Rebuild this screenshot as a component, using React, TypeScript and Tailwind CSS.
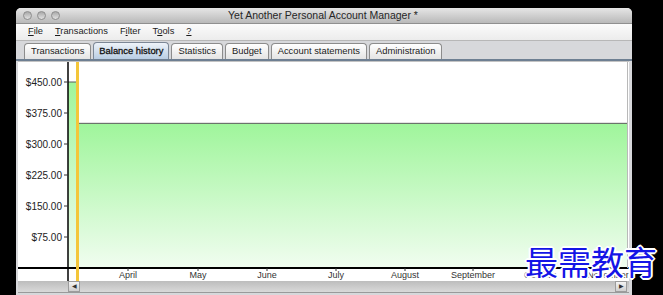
import type { ReactNode } from 'react'

const yTicks = [
  { label: '$450.00', v: 450 },
  { label: '$375.00', v: 375 },
  { label: '$300.00', v: 300 },
  { label: '$225.00', v: 225 },
  { label: '$150.00', v: 150 },
  { label: '$75.00', v: 75 },
]

const months = [
  { label: 'April', x: 110 },
  { label: 'May', x: 180 },
  { label: 'June', x: 249 },
  { label: 'July', x: 318 },
  { label: 'August', x: 387 },
  { label: 'September', x: 455 },
  { label: 'October', x: 522 },
  { label: 'November', x: 590 },
]

const tabs = ['Transactions', 'Balance history', 'Statistics', 'Budget', 'Account statements', 'Administration']

// chart coordinates: x-axis at y=206, y-axis at x=50
const AXIS_Y = 206
const yv = (v: number) => AXIS_Y - (v * 31) / 75

function Light() {
  return <div className="w-[9px] h-[9px] rounded-full bg-gradient-to-b from-[#a9a9a9] to-[#e2e2e2] border border-[#8d8d8d]" />
}

function BalanceChart() {
  const font = 'Liberation Sans, Arial, sans-serif'
  return (
    <svg width="611" height="219" className="block">
      <defs>
        <linearGradient id="fill" x1="0" y1="0" x2="0" y2="1">
          <stop offset="0" stopColor="#9ff59b" />
          <stop offset="1" stopColor="#f1fdf0" />
        </linearGradient>
      </defs>
      <rect x="0" y="0" width="611" height="219" fill="#ffffff" />
      {/* balance area */}
      <rect x="50" y={yv(450)} width="9" height={AXIS_Y - yv(450)} fill="url(#fill)" />
      <rect x="59" y={yv(350)} width="550" height={AXIS_Y - yv(350)} fill="url(#fill)" />
      <polyline
        points={`50,${yv(450)} 59,${yv(450)} 59,${yv(350)} 609,${yv(350)}`}
        fill="none"
        stroke="#5a5a5a"
        strokeWidth="1"
      />
      {/* y axis */}
      <line x1="50" y1="0" x2="50" y2="219" stroke="#000" strokeWidth="1.5" />
      {yTicks.map((t) => (
        <g key={t.label}>
          <line x1="46" y1={yv(t.v)} x2="50" y2={yv(t.v)} stroke="#333" />
          <text x="44" y={yv(t.v) + 3.5} textAnchor="end" fontSize="10" fontFamily={font} fill="#222">
            {t.label}
          </text>
        </g>
      ))}
      {/* x axis */}
      <line x1="0" y1={AXIS_Y} x2="611" y2={AXIS_Y} stroke="#000" strokeWidth="2" />
      {months.map((m) => (
        <g key={m.label}>
          <line x1={m.x} y1={AXIS_Y} x2={m.x} y2={AXIS_Y + 3} stroke="#333" />
          <text x={m.x} y="216" textAnchor="middle" fontSize="9" fontFamily={font} fill="#333">
            {m.label}
          </text>
        </g>
      ))}
      {/* today marker */}
      <rect x="58" y="0" width="3" height="219" fill="#f4c63a" />
      <line x1="609.5" y1="0" x2="609.5" y2="206" stroke="#b9b9b9" />
    </svg>
  )
}

function Tab({ children, active }: { children: ReactNode; active?: boolean }) {
  return (
    <div
      className={
        active
          ? 'h-[17px] px-[5px] flex items-center rounded-t-[4px] border border-b-0 border-[#7c8796] bg-gradient-to-b from-[#eef3f9] to-[#b9cde3] text-[#111] [-webkit-text-stroke:0.3px_#111]'
          : 'h-[16px] px-[6px] flex items-center rounded-t-[4px] border border-b-0 border-[#8c8c8c] bg-gradient-to-b from-[#ffffff] to-[#e4e4e4] text-[#222]'
      }
    >
      {children}
    </div>
  )
}

export default function App() {
  return (
    <div className="relative w-[663px] h-[295px] bg-black overflow-hidden pt-[8px] pl-[16px] font-['Liberation_Sans',Arial,sans-serif]">
      <div className="w-[616px] h-[300px] flex flex-col bg-[#d7d8db] rounded-t-[5px] overflow-hidden">
        {/* Title bar */}
        <div className="h-[16px] relative flex items-center bg-gradient-to-b from-[#e6e6e6] to-[#b9b9b9] border-b border-[#8f8f8f]">
          <div className="flex gap-[5px] pl-[7px]">
            <Light />
            <Light />
            <Light />
          </div>
          <div className="absolute inset-0 flex items-center justify-center pr-[2px] text-[10.5px] text-[#262626]">
            Yet Another Personal Account Manager *
          </div>
        </div>

        {/* Menu bar */}
        <div className="h-[17px] flex items-center gap-[12px] pl-[12px] text-[9.3px] text-[#1c1c1c] bg-gradient-to-b from-[#fbfbfb] to-[#ececec] border-b border-[#b7b7b7]">
          <span>
            <span className="underline">F</span>ile
          </span>
          <span>
            <span className="underline">T</span>ransactions
          </span>
          <span>
            F<span className="underline">i</span>lter
          </span>
          <span>
            T<span className="underline">o</span>ols
          </span>
          <span className="underline">?</span>
        </div>

        {/* Tabs */}
        <div className="h-[20px] flex items-end gap-[2px] pl-[8px] text-[9.4px] border-b-2 border-[#6e7f92]">
          {tabs.map((t) => (
            <Tab key={t} active={t === 'Balance history'}>
              {t}
            </Tab>
          ))}
        </div>

        {/* Content */}
        <div className="flex flex-col pl-[2px]">
          <div className="w-[611px] border-t border-[#c3c3c3]">
            <BalanceChart />
          </div>
          <div className="w-[611px] h-[12px] flex items-center bg-gradient-to-b from-[#bdbdbd] to-[#d9d9d9] border-b border-[#9a9a9a]">
            <div className="w-[50px]" />
            <div className="w-[12px] h-[11px] flex items-center justify-center bg-gradient-to-b from-[#f4f4f4] to-[#cfcfcf] border border-[#9c9c9c] text-[6px] text-[#333]">
              ◀
            </div>
            <div className="flex-1" />
            <div className="w-[12px] h-[11px] mr-[2px] flex items-center justify-center bg-gradient-to-b from-[#f4f4f4] to-[#cfcfcf] border border-[#9c9c9c] text-[6px] text-[#333]">
              ▶
            </div>
          </div>
        </div>
      </div>

      {/* Watermark overlay */}
      <div className="absolute left-[525px] top-[245px] text-[33px] leading-none tracking-[0px] text-[#1414e6] font-['Noto_Sans_CJK_SC',sans-serif] [text-shadow:0_0_2px_#fff,1px_1px_0_#fff,-1px_-1px_0_#fff,1px_-1px_0_#fff,-1px_1px_0_#fff,2px_0_0_#fff,-2px_0_0_#fff,0_2px_0_#fff,0_-2px_0_#fff]">
        最需教育
      </div>
    </div>
  )
}
